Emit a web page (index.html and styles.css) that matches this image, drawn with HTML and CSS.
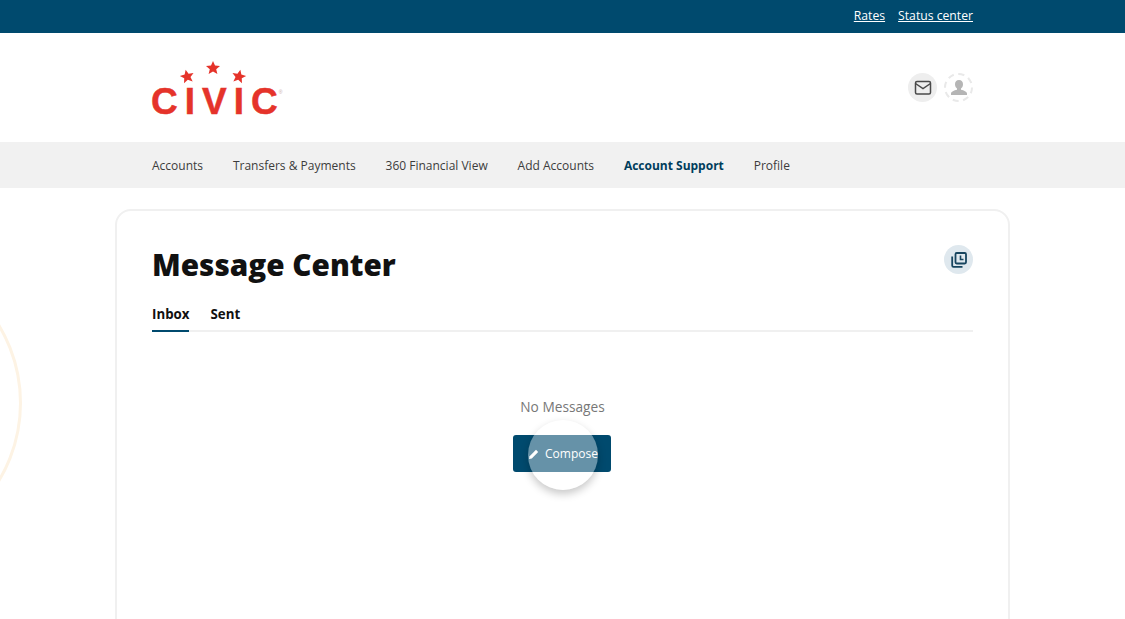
FILE: index.html
```html
<!DOCTYPE html>
<html lang="en">
<head>
<meta charset="utf-8">
<title>Message Center</title>
<link rel="stylesheet" href="styles.css">
</head>
<body>
<div class="deco-circle"></div>
<div class="topbar">
  <a href="#">Rates</a>
  <a href="#">Status center</a>
</div>
<header class="header">
  <div class="logo">
    <svg class="logo-stars" width="100" height="26" viewBox="0 0 100 26">
      <polygon fill="#e5332a" points="50,0 52,4.6 57,5 53.2,8.2 54.4,13 50,10.4 45.6,13 46.800,8.2 43,5 48,4.600"/>
      <polygon fill="#e5332a" transform="translate(-26 8.500) rotate(-12 50 6.500)" points="50,0 52,4.6 57,5 53.2,8.200 54.400,13 50,10.400 45.600,13 46.800,8.200 43,5 48,4.600"/>
      <polygon fill="#e5332a" transform="translate(26 8.500) rotate(12 50 6.500)" points="50,0 52,4.6 57,5 53.2,8.200 54.400,13 50,10.400 45.600,13 46.800,8.200 43,5 48,4.600"/>
    </svg>
    <div class="logo-word">CIVI<span class="logo-last">C</span><sup class="logo-reg">®</sup></div>
  </div>
  <div class="header-icons">
    <span class="icon-mail">
      <svg width="18" height="16" viewBox="0 0 18 16" fill="none" stroke="#4a4a4a" stroke-width="1.500">
        <rect x="1.500" y="1.500" width="15" height="12.500" rx="1.500"/>
        <path d="M1.500 3.500 9 8.500l7.500-5"/>
      </svg>
    </span>
    <span class="icon-user">
      <svg width="20" height="18" viewBox="0 0 20 18" fill="#b5b5b5">
        <path d="M10 1c2.600 0 4 1.900 4 4.300 0 2-1 3.600-2 4.300v1.200c2.800.7 6 1.800 6 3.700V16H2v-1.500c0-1.900 3.200-3 6-3.700V9.600c-1-.7-2-2.300-2-4.300C6 2.900 7.400 1 10 1z"/>
      </svg>
    </span>
  </div>
</header>
<nav class="nav">
  <a href="#">Accounts</a>
  <a href="#">Transfers &amp; Payments</a>
  <a href="#">360 Financial View</a>
  <a href="#">Add Accounts</a>
  <a href="#" class="active">Account Support</a>
  <a href="#">Profile</a>
</nav>
<main class="card">
  <div class="card-head">
    <h1>Message Center</h1>
    <span class="icon-copy">
      <svg width="16" height="16" viewBox="0 0 16 16" fill="none" stroke="#17455f" stroke-width="1.800">
        <rect x="4.500" y="1" width="10.500" height="10.500" rx="1.200"/>
        <path d="M1.200 4.500V13.500a1.300 1.300 0 0 0 1.300 1.300H11.500"/>
        <path d="M9.500 3.500V7.500H12.500" stroke-width="1.600"/>
      </svg>
    </span>
  </div>
  <div class="tabs">
    <a href="#" class="tab selected">Inbox</a>
    <a href="#" class="tab">Sent</a>
  </div>
  <div class="empty">
    <p>No Messages</p>
    <button class="compose" type="button">
      <svg width="12" height="12" viewBox="0 0 12 12" fill="#ffffff"><path d="M1 11l.6-2.800L8 1.800l2.200 2.200L3.800 10.400z"/></svg>
      Compose
      <span class="spotlight"></span>
    </button>
  </div>
</main>
</body>
</html>
```
FILE: styles.css
```css
* { box-sizing: border-box; }
html, body { margin: 0; height: 100%; }
body {
  position: relative;
  height: 619px;
  overflow: hidden;
  background: #fff;
  font-family: "Open Sans", sans-serif;
  color: #333;
}
a { color: inherit; text-decoration: none; }

.deco-circle {
  position: absolute;
  left: -282px;
  top: 251px;
  width: 304px;
  height: 304px;
  border: 3px solid #fdf3e4;
  border-radius: 50%;
}

.topbar {
  height: 33px;
  background: #004a6e;
  display: flex;
  justify-content: flex-end;
  align-items: center;
  gap: 13px;
  padding: 0 152px 3px 0;
  font-size: 12.200px;
  color: #fff;
}
.topbar a { text-decoration: underline; }

.header {
  height: 109px;
  padding: 28px 152px 0 151px;
  display: flex;
  justify-content: space-between;
  align-items: flex-start;
}
.logo { position: relative; width: 132px; height: 56px; }
.logo-stars { display: block; margin-left: 12px; }
.logo-word {
  margin-top: -2px;
  font-family: "Liberation Sans", sans-serif;
  font-weight: 700;
  font-size: 37px;
  line-height: 34px;
  letter-spacing: 7px;
  color: #e5332a;
  white-space: nowrap;
  -webkit-text-stroke: 0.5px #e5332a;
}
.logo-last { letter-spacing: 0; }
.logo-reg {
  position: absolute;
  font-size: 5px;
  line-height: 1;
  letter-spacing: 0;
  color: #c9a9a6;
  margin: 5px 0 0 1px;
  font-weight: 400;
  -webkit-text-stroke: 0;
}
.header-icons { display: flex; gap: 7px; margin-top: 12px; }
.icon-mail, .icon-user {
  width: 29px;
  height: 29px;
  border-radius: 50%;
  display: flex;
  align-items: center;
  justify-content: center;
}
.icon-mail { background: #eeeeee; }
.icon-user { border: 2px dashed #e9e9e9; }

.nav {
  height: 46px;
  background: #f1f1f1;
  display: flex;
  align-items: center;
  gap: 29.900px;
  padding: 0 0 0 152px;
  font-size: 12px;
  color: #3c3c3c;
}
.nav .active { font-weight: 700; color: #003d5c; }

.card {
  width: 895px;
  height: 520px;
  margin: 21px 0 0 115px;
  padding: 0 35px;
  border: 2px solid #f0f0f0;
  border-radius: 16px;
  background: #fff;
  position: relative;
}
.card-head {
  display: flex;
  justify-content: space-between;
  align-items: flex-start;
  height: 84px;
  padding-top: 34px;
}
h1 {
  margin: 0;
  font-size: 29.700px;
  font-weight: 800;
  line-height: 40px;
  color: #111;
}
.icon-copy {
  width: 29px;
  height: 29px;
  border-radius: 50%;
  background: #dfe8ee;
  display: flex;
  align-items: center;
  justify-content: center;
}
.tabs {
  display: flex;
  gap: 21px;
  height: 37px;
  border-bottom: 2px solid #f0f0f0;
  font-size: 13.300px;
  font-weight: 700;
  color: #111;
}
.tab { height: 37px; padding-top: 9px; line-height: 20px; }
.tab.selected { border-bottom: 2px solid #004a6e; }

.empty {
  display: flex;
  flex-direction: column;
  align-items: center;
  padding-top: 65px;
}
.empty p {
  margin: 0 0 18px;
  font-size: 13.700px;
  line-height: 20px;
  color: #777;
}
.compose {
  position: relative;
  width: 98px;
  height: 37px;
  margin-left: -1px;
  border: 0;
  border-radius: 3px;
  background: #004a6e;
  color: #fff;
  font-family: inherit;
  font-size: 12px;
  display: flex;
  align-items: center;
  justify-content: center;
  gap: 5px;
  padding: 0 0 0 2px;
}
.spotlight {
  position: absolute;
  left: 15px;
  top: -15px;
  width: 70px;
  height: 70px;
  border-radius: 50%;
  background: rgba(255, 255, 255, 0.4);
  box-shadow: 0 4px 8px rgba(0, 0, 0, 0.22);
}
```
